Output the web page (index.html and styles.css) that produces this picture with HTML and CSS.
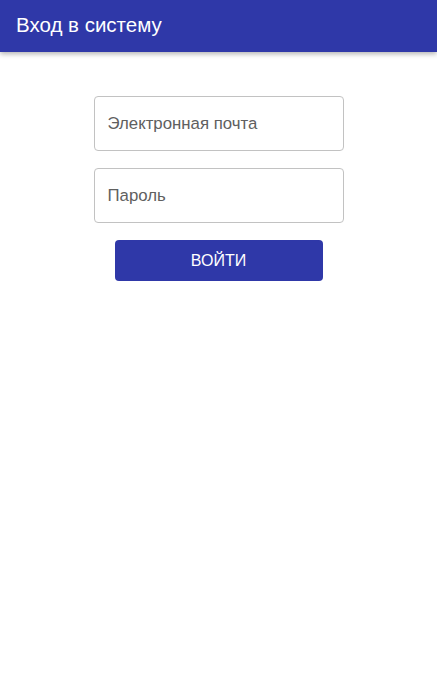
FILE: index.html
```html
<!DOCTYPE html>
<html lang="ru">
<head>
<meta charset="utf-8">
<link rel="stylesheet" href="styles.css">
</head>
<body>
<header class="appbar">
  <h1 class="title">Вход в систему</h1>
</header>
<main class="content">
  <form class="login">
    <input class="field" type="email" placeholder="Электронная почта">
    <input class="field" type="password" placeholder="Пароль">
    <button class="btn" type="button">ВОЙТИ</button>
  </form>
</main>
</body>
</html>
```
FILE: styles.css
```css
html, body {
  margin: 0;
  padding: 0;
  background: #ffffff;
  font-family: "Liberation Sans", Arial, sans-serif;
}
.appbar {
  height: 52px;
  background: #2f38a8;
  display: flex;
  align-items: center;
  padding: 0 16px;
  box-shadow: 0 2px 5px rgba(0,0,0,0.3);
}
.title {
  margin: 0;
  color: #ffffff;
  font-size: 20.5px;
  font-weight: 400;
  padding-bottom: 2px;
}
.content {
  display: flex;
  justify-content: center;
  padding-top: 44px;
}
.login {
  width: 250px;
  display: flex;
  flex-direction: column;
  align-items: center;
}
.field {
  box-sizing: border-box;
  width: 250px;
  height: 55px;
  margin: 0 0 17px;
  padding: 0 13px;
  border: 1px solid #c2c2c2;
  border-radius: 4px;
  font-family: "Liberation Sans", Arial, sans-serif;
  font-size: 16.8px;
  color: #333;
  outline: none;
}
.field::placeholder {
  color: #606060;
  opacity: 1;
}
.btn {
  width: 208px;
  height: 41px;
  background: #2f38a8;
  color: #ffffff;
  border: none;
  border-radius: 4px;
  font-family: "Liberation Sans", Arial, sans-serif;
  font-size: 16px;
  padding: 0;
  margin-top: 0;
}
```
